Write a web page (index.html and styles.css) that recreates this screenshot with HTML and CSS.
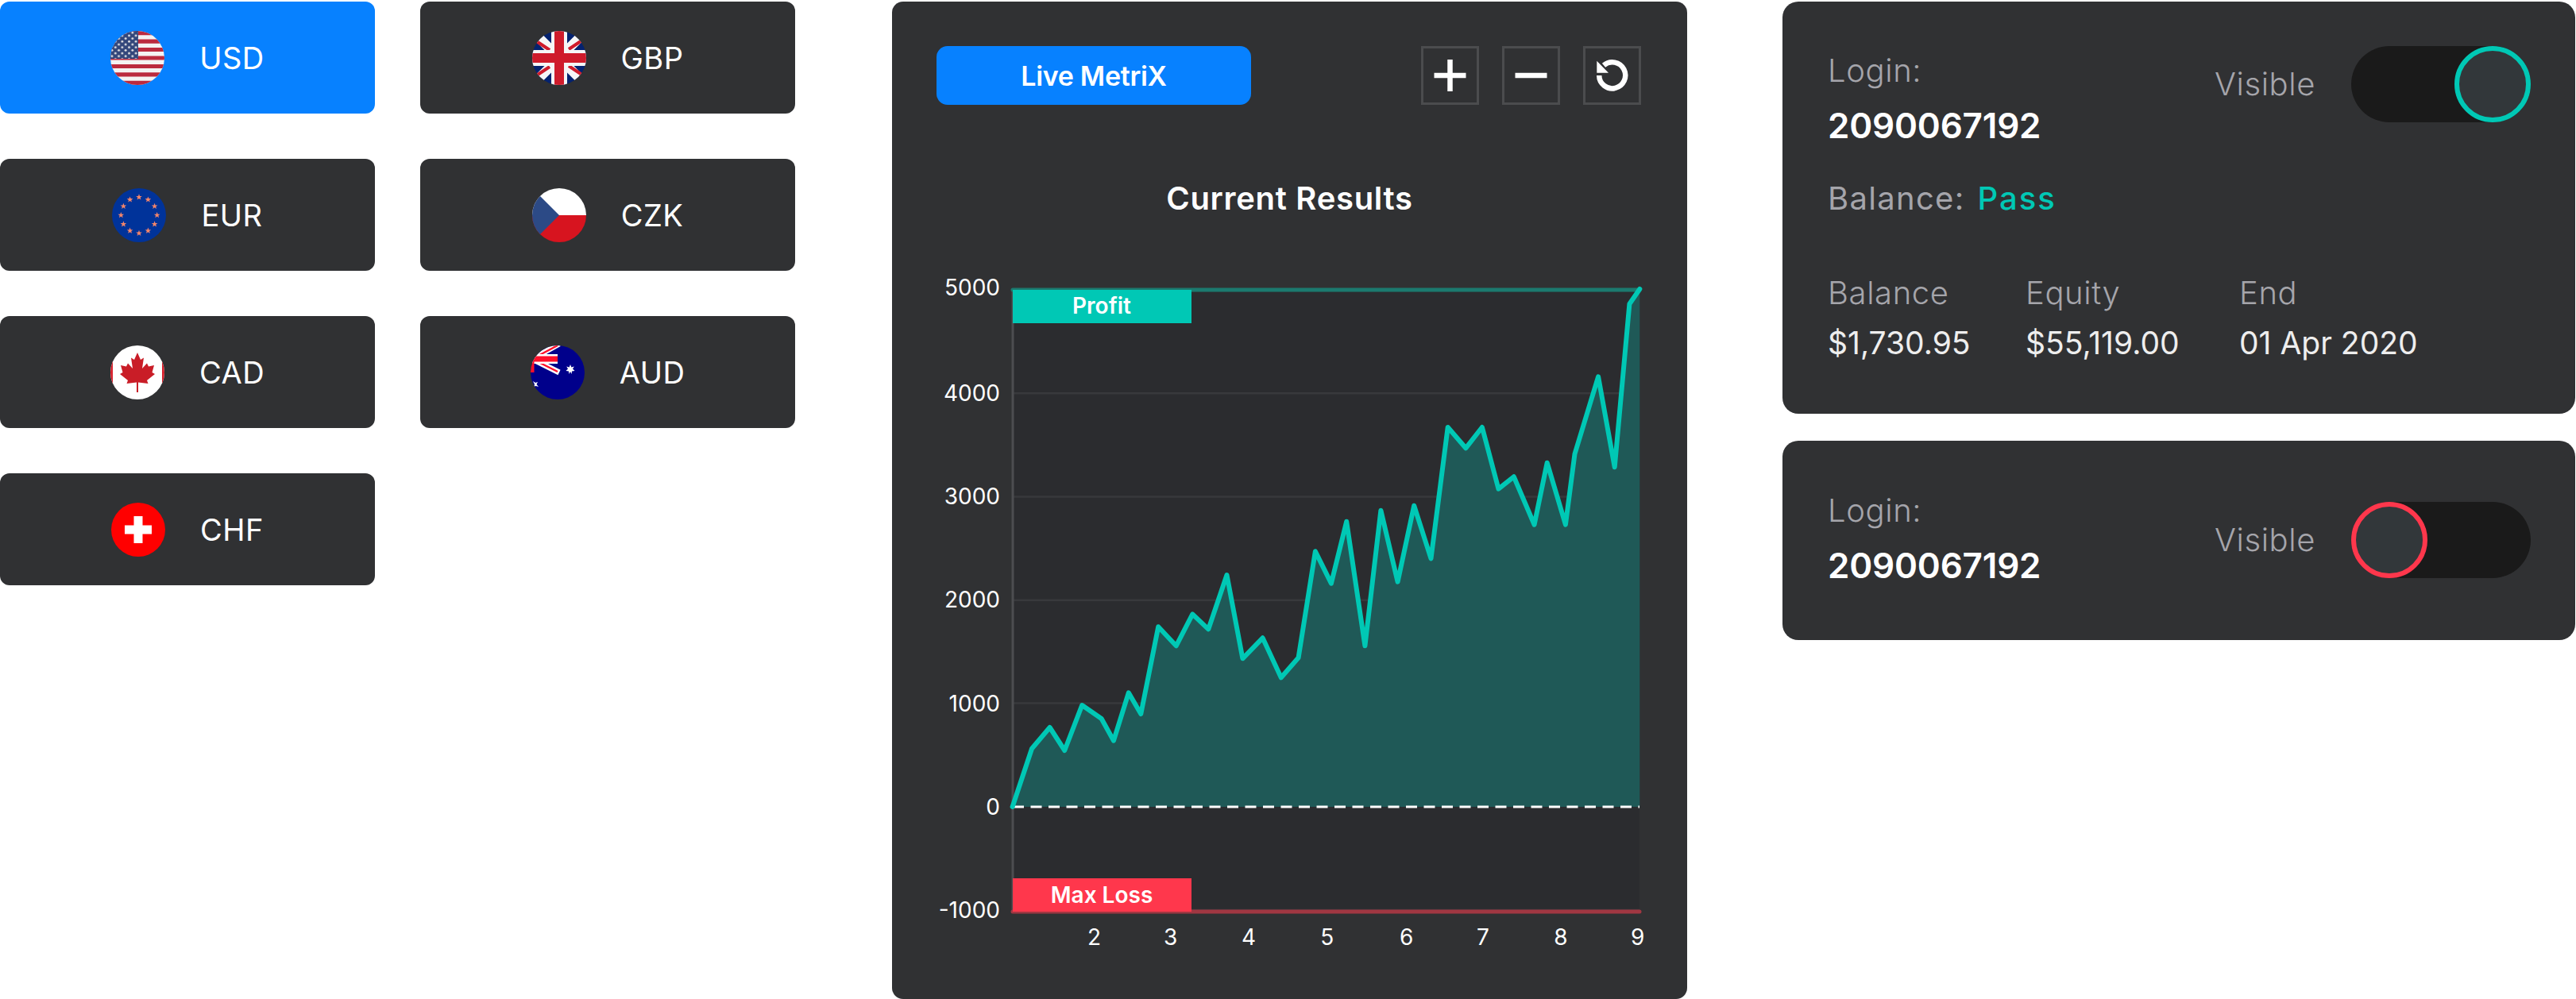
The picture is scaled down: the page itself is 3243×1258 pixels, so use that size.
FILE: index.html
```html
<!DOCTYPE html>
<html lang="en">
<head>
    <meta charset="UTF-8">
    <meta name="viewport" content="width=device-width, initial-scale=1.0">
    <title>Live MetriX</title>
    <link rel="stylesheet" href="styles.css">
</head>
<body>
    <main class="page">
        <section class="currencies">
            <button class="currency active" type="button">
                <svg class="flag" viewBox="0 0 68 68">
                    <defs>
                        <clipPath id="round"><circle cx="34" cy="34" r="34"/></clipPath>
                        <pattern id="usStars" patternUnits="userSpaceOnUse" width="8.6" height="7.4">
                            <circle cx="2" cy="2" r="1.4" fill="#e8e6e6"/>
                            <circle cx="6.3" cy="5.7" r="1.4" fill="#e8e6e6"/>
                        </pattern>
                        <polygon id="euStar" points="0,-4 1,-1.3 3.8,-1.2 1.6,0.5 2.4,3.2 0,1.6 -2.4,3.2 -1.6,0.5 -3.8,-1.2 -1,-1.3"/>
                    </defs>
                    <g clip-path="url(#round)">
                        <rect width="68" height="68" fill="#f4f2f2"/>
                        <path d="M0 2.6h68M0 13.1h68M0 23.5h68M0 34h68M0 44.5h68M0 54.9h68M0 65.4h68" stroke="#bb2a3e" stroke-width="5.23"/>
                        <rect width="35" height="35" fill="#33477b"/>
                        <rect width="35" height="35" fill="url(#usStars)"/>
                    </g>
                </svg>
                <span>USD</span>
            </button>
            <button class="currency" type="button">
                <svg class="flag" viewBox="0 0 68 68">
                    <g clip-path="url(#round)">
                        <rect width="68" height="68" fill="#04226f"/>
                        <path d="M0 0L68 68M68 0L0 68" stroke="#f6f6f6" stroke-width="12"/>
                        <path d="M4 12L22 24M46 44L64 56M64 11L46 23M22 45L4 57" stroke="#cf1b2b" stroke-width="4"/>
                        <path d="M34 0V68M0 34H68" stroke="#f6f6f6" stroke-width="20"/>
                        <path d="M34 0V68M0 34H68" stroke="#cf1b2b" stroke-width="12"/>
                    </g>
                </svg>
                <span>GBP</span>
            </button>
            <button class="currency" type="button">
                <svg class="flag" viewBox="0 0 68 68">
                    <g clip-path="url(#round)" fill="#f5866a">
                        <rect width="68" height="68" fill="#00339a"/>
                        <use href="#euStar" x="34" y="11.3"/>
                        <use href="#euStar" x="45.4" y="14.4"/>
                        <use href="#euStar" x="53.6" y="22.7"/>
                        <use href="#euStar" x="56.7" y="34"/>
                        <use href="#euStar" x="53.6" y="45.3"/>
                        <use href="#euStar" x="45.4" y="53.6"/>
                        <use href="#euStar" x="34" y="56.7"/>
                        <use href="#euStar" x="22.6" y="53.6"/>
                        <use href="#euStar" x="14.4" y="45.3"/>
                        <use href="#euStar" x="11.3" y="34"/>
                        <use href="#euStar" x="14.4" y="22.7"/>
                        <use href="#euStar" x="22.6" y="14.4"/>
                    </g>
                </svg>
                <span>EUR</span>
            </button>
            <button class="currency" type="button">
                <svg class="flag" viewBox="0 0 68 68">
                    <g clip-path="url(#round)">
                        <rect width="68" height="34" fill="#ffffff"/>
                        <rect y="34" width="68" height="34" fill="#d7141f"/>
                        <polygon points="0,0 34,34 0,68" fill="#2c4a86"/>
                    </g>
                </svg>
                <span>CZK</span>
            </button>
            <button class="currency" type="button">
                <svg class="flag" viewBox="0 0 68 68">
                    <g clip-path="url(#round)">
                        <rect width="68" height="68" fill="#ffffff"/>
                        <path d="M0 0h3v68H0zM65 0h3v68h-3z" fill="#d6202c"/>
                        <polygon fill="#c91d27" points="34,9 38,18 42,15.5 40,29 46,22.5 48,26.5 55,25 52.5,34 56,36 46,44 47.5,48 35,46.5 35,59 33,59 33,46.5 20.5,48 22,44 12,36 15.5,34 13,25 20,26.5 22,22.5 28,29 26,15.5 30,18"/>
                    </g>
                </svg>
                <span>CAD</span>
            </button>
            <button class="currency" type="button">
                <svg class="flag" viewBox="0 0 68 68">
                    <g clip-path="url(#round)">
                        <rect width="68" height="68" fill="#00008b"/>
                        <path d="M2 17L36 -2M2 17L36 34" stroke="#ffffff" stroke-width="7"/>
                        <path d="M2 17L34 0M2 17L34 33" stroke="#ff0f2a" stroke-width="2.4"/>
                        <path d="M0 17H34" stroke="#ffffff" stroke-width="12"/>
                        <path d="M0 17H34" stroke="#ff0f2a" stroke-width="7"/>
                        <path d="M2 0V34" stroke="#ff0f2a" stroke-width="5"/>
                        <polygon fill="#ffffff" points="50,24 51.4,27.4 54.8,26.4 53,29.6 55.6,32 52,32.4 51.6,36 50,33 48.4,36 48,32.4 44.4,32 47,29.6 45.2,26.4 48.6,27.4"/>
                        <polygon fill="#ffffff" points="3,45 6,47 9,46 7.5,49 10,52 6.5,51 4,52 5,49"/>
                    </g>
                </svg>
                <span>AUD</span>
            </button>
            <button class="currency" type="button">
                <svg class="flag" viewBox="0 0 68 68">
                    <circle cx="34" cy="34" r="34" fill="#ff0000"/>
                    <path d="M28.5 17h11v11.500h11.500v11h-11.500v11.500h-11v-11.500h-11.500v-11h11.500z" fill="#ffffff"/>
                </svg>
                <span>CHF</span>
            </button>
        </section>

        <section class="panel">
            <div class="panel-head">
                <button class="live-btn" type="button">Live MetriX</button>
                <div class="tools">
                    <button class="tool" type="button">
                        <svg viewBox="0 0 67 67"><path d="M33.500 13.500v40M13.500 33.500h40" class="tool-line"/></svg>
                    </button>
                    <button class="tool" type="button">
                        <svg viewBox="0 0 67 67"><path d="M13.500 33.500h40" class="tool-line"/></svg>
                    </button>
                    <button class="tool" type="button">
                        <svg viewBox="0 0 67 67">
                            <path d="M17.200 33.500A16.500 16.500 0 1 0 23 20.800" class="tool-line"/>
                            <polygon points="14.300,15.300 14.300,30.300 29,30.300" fill="#fff"/>
                        </svg>
                    </button>
                </div>
            </div>
            <h2 class="panel-title">Current Results</h2>
            <svg class="chart" viewBox="1123 340 1001 880">
                <rect x="1275" y="365" width="789" height="783" fill="#2b2c2f"/>
                <path d="M1275 495.300H2064M1275 625.500H2064M1275 755.800H2064M1275 885.500H2064M1275 1146H2064" class="grid"/>
                <polygon class="area" points="1274.600,1016 1299,942.700 1321.600,916 1340.300,945 1362.200,888 1386.700,905 1402,932.700 1420.800,872.300 1436.300,899 1458.200,789.300 1480.700,813.300 1501.300,773.300 1521.300,792.300 1544.500,724 1564.400,829.300 1589.600,803.300 1612.800,853.300 1634.600,828.300 1655.900,694.300 1675.900,734.700 1695.200,656.700 1718.400,813.300 1738.400,642.700 1759.600,732.700 1780.200,636.700 1801.500,703.300 1822.700,538 1845.300,564.300 1865.900,538 1886.500,615.700 1905.800,600.300 1931.600,660.700 1947.700,582.700 1970.900,660.700 1982.500,571.700 2012.100,474.300 2032.700,588.300 2051.400,382.700 2064.300,364 2064.300,1016"/>
                <path d="M1275 365V1148" class="axis"/>
                <path d="M1275 365H2064" class="limit-top"/>
                <path d="M1275 1148H2064" class="limit-bottom"/>
                <path d="M1275 1016H2064" class="zero"/>
                <polyline class="line" points="1274.600,1016 1299,942.700 1321.600,916 1340.300,945 1362.200,888 1386.700,905 1402,932.700 1420.800,872.300 1436.300,899 1458.200,789.300 1480.700,813.300 1501.300,773.300 1521.300,792.300 1544.500,724 1564.400,829.300 1589.600,803.300 1612.800,853.300 1634.600,828.300 1655.900,694.300 1675.900,734.700 1695.200,656.700 1718.400,813.300 1738.400,642.700 1759.600,732.700 1780.200,636.700 1801.500,703.300 1822.700,538 1845.300,564.300 1865.900,538 1886.500,615.700 1905.800,600.300 1931.600,660.700 1947.700,582.700 1970.900,660.700 1982.500,571.700 2012.100,474.300 2032.700,588.300 2051.400,382.700 2064.300,364"/>
                <rect x="1275" y="365" width="225" height="42" fill="#00c8b5"/>
                <rect x="1275" y="1106" width="225" height="42" fill="#ff374c"/>
                <text x="1387" y="395" class="tag">Profit</text>
                <text x="1387" y="1137" class="tag">Max Loss</text>
                <text x="1259" y="372" class="y-label">5000</text>
                <text x="1259" y="505" class="y-label">4000</text>
                <text x="1259" y="635" class="y-label">3000</text>
                <text x="1259" y="765" class="y-label">2000</text>
                <text x="1259" y="896" class="y-label">1000</text>
                <text x="1259" y="1026" class="y-label">0</text>
                <text x="1259" y="1156" class="y-label">-1000</text>
                <text x="1377.600" y="1190" class="x-label">2</text>
                <text x="1473.600" y="1190" class="x-label">3</text>
                <text x="1572" y="1190" class="x-label">4</text>
                <text x="1670.700" y="1190" class="x-label">5</text>
                <text x="1770.600" y="1190" class="x-label">6</text>
                <text x="1867" y="1190" class="x-label">7</text>
                <text x="1965" y="1190" class="x-label">8</text>
                <text x="2061.700" y="1190" class="x-label">9</text>
            </svg>
        </section>

        <section class="accounts">
            <div class="card">
                <div class="card-top">
                    <div class="account">
                        <div class="label">Login:</div>
                        <div class="login">2090067192</div>
                    </div>
                    <div class="visible">
                        <span class="label">Visible</span>
                        <div class="toggle on"><div class="knob"></div></div>
                    </div>
                </div>
                <div class="status"><span>Balance:</span><span class="pass">Pass</span></div>
                <div class="stats">
                    <div>
                        <div class="label">Balance</div>
                        <div class="value">$1,730.95</div>
                    </div>
                    <div>
                        <div class="label">Equity</div>
                        <div class="value">$55,119.00</div>
                    </div>
                    <div>
                        <div class="label">End</div>
                        <div class="value">01 Apr 2020</div>
                    </div>
                </div>
            </div>
            <div class="card compact">
                <div class="card-top">
                    <div class="account">
                        <div class="label">Login:</div>
                        <div class="login">2090067192</div>
                    </div>
                    <div class="visible">
                        <span class="label">Visible</span>
                        <div class="toggle off"><div class="knob"></div></div>
                    </div>
                </div>
            </div>
        </section>
    </main>
</body>
</html>
```

FILE: styles.css
```css
html, body {
    height: 1258px;
    overflow: hidden;
}

body {
    margin: 0;
    background-color: #fff;
    color: #fff;
    font-family: Inter, "Noto Sans", sans-serif;
}

.page {
    display: flex;
    align-items: flex-start;
    width: 3243px;
    height: 1258px;
    padding-top: 2px;
    box-sizing: border-box;
    overflow: hidden;
}

button {
    font-family: inherit;
    color: #fff;
    border: none;
    cursor: pointer;
}

/* currency buttons */
.currencies {
    display: grid;
    grid-template-columns: 472px 472px;
    grid-auto-rows: 141px;
    gap: 57px;
    width: 1001px;
}

.currency {
    display: flex;
    align-items: center;
    justify-content: center;
    gap: 44px;
    padding: 0;
    background-color: #303133;
    border-radius: 12px;
    font-size: 38px;
    font-weight: 400;
    letter-spacing: 0.5px;
}

.currency.active {
    background-color: #0781ff;
}

.flag {
    width: 68px;
    height: 68px;
}

/* chart panel */
.panel {
    width: 1001px;
    height: 1256px;
    margin-left: 122px;
    padding-top: 56px;
    box-sizing: border-box;
    background-color: #303133;
    border-radius: 14px;
}

.panel-head {
    display: flex;
    justify-content: space-between;
    padding: 0 58px 0 56px;
}

.live-btn {
    width: 396px;
    height: 74px;
    padding: 0;
    background-color: #0781ff;
    border-radius: 14px;
    font-size: 34px;
    font-weight: 600;
    letter-spacing: -0.3px;
}

.tools {
    display: flex;
    gap: 29px;
}

.tool {
    width: 73px;
    height: 74px;
    padding: 0;
    background: none;
    border: 3px solid #4b4c4e;
}

.tool svg {
    display: block;
    width: 67px;
    height: 68px;
}

.tool-line {
    fill: none;
    stroke: #fff;
    stroke-width: 6.5;
}

.panel-title {
    margin: 88px 0 0;
    font-size: 40px;
    line-height: 60px;
    font-weight: 600;
    letter-spacing: 0.7px;
    text-align: center;
}

.chart {
    display: block;
    width: 1001px;
    height: 880px;
    margin-top: 60px;
}

.grid {
    fill: none;
    stroke: #38393c;
    stroke-width: 2.5;
}

.axis {
    fill: none;
    stroke: #4c4d50;
    stroke-width: 3;
}

.area {
    fill: #1f5957;
}

.line {
    fill: none;
    stroke: #00c8b5;
    stroke-width: 6;
    stroke-linejoin: round;
    stroke-linecap: round;
}

.limit-top {
    stroke: #1b7a6f;
    stroke-width: 5;
    stroke-linecap: round;
}

.limit-bottom {
    stroke: #a13742;
    stroke-width: 5;
    stroke-linecap: round;
}

.zero {
    stroke: #fff;
    stroke-width: 3;
    stroke-dasharray: 14 8.500;
}

.tag {
    fill: #fff;
    font-size: 28px;
    font-weight: 600;
    text-anchor: middle;
}

.y-label {
    fill: #fff;
    font-size: 28px;
    text-anchor: end;
}

.x-label {
    fill: #fff;
    font-size: 28px;
    text-anchor: middle;
}

/* account cards */
.accounts {
    display: flex;
    flex-direction: column;
    gap: 34px;
    width: 998px;
    margin-left: 120px;
}

.card {
    height: 519px;
    padding: 56px 56px 0 57px;
    box-sizing: border-box;
    background-color: #303133;
    border-radius: 20px;
}

.card.compact {
    height: 251px;
    padding-top: 57px;
}

.card-top {
    display: flex;
    justify-content: space-between;
    align-items: flex-start;
}

.account {
    padding-top: 4px;
}

.label {
    color: #a5a5ab;
    font-size: 40px;
    line-height: 54px;
    font-weight: 300;
    letter-spacing: 0.6px;
}

.login {
    margin-top: 14px;
    font-size: 44px;
    line-height: 56px;
    font-weight: 600;
    letter-spacing: -0.2px;
}

.visible {
    display: flex;
    align-items: center;
    gap: 45px;
}

.compact .visible {
    margin-top: 20px;
}

.toggle {
    display: flex;
    width: 226px;
    height: 96px;
    background-color: #1a1a1a;
    border-radius: 48px;
}

.toggle.on {
    justify-content: flex-end;
}

.knob {
    width: 96px;
    height: 96px;
    box-sizing: border-box;
    background-color: #32373a;
    border: 6px solid #00c8b5;
    border-radius: 50%;
}

.toggle.off .knob {
    border-color: #ff374c;
}

.status {
    display: flex;
    gap: 16px;
    margin-top: 36px;
    color: #a5a5ab;
    font-size: 40px;
    line-height: 56px;
    letter-spacing: 1.3px;
}

.pass {
    color: #00c8b5;
    font-weight: 500;
    letter-spacing: 2px;
}

.stats {
    display: grid;
    grid-template-columns: 249px 269px auto;
    margin-top: 64px;
}

.value {
    margin-top: 8px;
    color: #eee;
    font-size: 39px;
    line-height: 56px;
}
```
